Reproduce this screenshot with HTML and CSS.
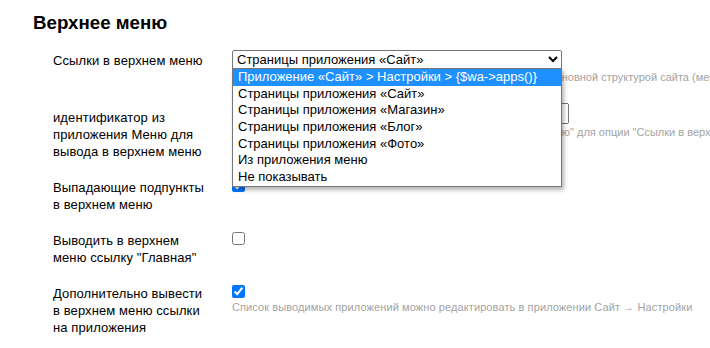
FILE: index.html
```html
<!DOCTYPE html>
<html lang="ru">
<head>
    <meta charset="UTF-8">
    <title>Верхнее меню</title>
    <link rel="stylesheet" href="styles.css">
</head>
<body>
    <div class="page">
        <h1 class="title">Верхнее меню</h1>
        <div class="fields">
            <div class="field">
                <div class="name name-top">Ссылки в верхнем меню</div>
                <div class="value">
                    <div class="dropdown">
                        <select class="menu-select">
                            <option>Страницы приложения «Сайт»</option>
                        </select>
                        <ul class="options">
                            <li class="selected">Приложение «Сайт» &gt; Настройки &gt; {$wa-&gt;apps()}</li>
                            <li>Страницы приложения «Сайт»</li>
                            <li>Страницы приложения «Магазин»</li>
                            <li>Страницы приложения «Блог»</li>
                            <li>Страницы приложения «Фото»</li>
                            <li>Из приложения меню</li>
                            <li>Не показывать</li>
                        </ul>
                    </div>
                    <p class="hint">Укажите откуда идут ссылки верхнего меню: в соответствии с основной структурой сайта (меню)</p>
                </div>
            </div>
            <div class="field">
                <div class="name name-low">идентификатор из приложения Меню для вывода в верхнем меню</div>
                <div class="value">
                    <input type="text" class="text-input">
                    <p class="hint">Укажите код меню, если выбрано значение "Из приложения меню" для опции "Ссылки в верхнем меню"</p>
                </div>
            </div>
            <div class="field">
                <div class="name">Выпадающие подпункты в верхнем меню</div>
                <div class="value">
                    <input type="checkbox" checked>
                </div>
            </div>
            <div class="field">
                <div class="name">Выводить в верхнем меню ссылку "Главная"</div>
                <div class="value">
                    <input type="checkbox">
                </div>
            </div>
            <div class="field">
                <div class="name">Дополнительно вывести в верхнем меню ссылки на приложения</div>
                <div class="value">
                    <input type="checkbox" checked>
                    <p class="hint hint-wide">Список выводимых приложений можно редактировать в приложении Сайт → Настройки</p>
                </div>
            </div>
        </div>
    </div>
</body>
</html>
```

FILE: styles.css
```css
body {
    margin: 0;
    font-family: 'Liberation Sans', Arial, sans-serif;
    font-size: 13px;
    color: #000;
    background: #fff;
    overflow: hidden;
}

.page {
    padding: 12px 0 0 33px;
}

.title {
    margin: 0;
    font-size: 18.7px;
    line-height: 22px;
    font-weight: bold;
}

.fields {
    display: flex;
    flex-direction: column;
    gap: 19px;
    margin-top: 16px;
    padding-left: 20px;
}

.field {
    display: grid;
    grid-template-columns: 153px 1fr;
    column-gap: 26px;
    align-items: start;
}

.name {
    line-height: 17px;
    letter-spacing: 0.1px;
}

.name-top {
    padding-top: 2px;
}

.name-low {
    padding-top: 6px;
}

.value {
    display: flex;
    flex-direction: column;
    align-items: flex-start;
    min-width: 0;
}

.value input[type="checkbox"] {
    width: 13px;
    height: 13px;
    margin: 0;
}

.hint {
    margin: 1px 0 0;
    font-size: 11px;
    line-height: 14px;
    color: #a3a3a3;
    white-space: nowrap;
}

.hint-wide {
    letter-spacing: 0.1px;
}

.value input[type="checkbox"] + .hint {
    margin-top: 2px;
}

.dropdown {
    position: relative;
    z-index: 2;
}

.menu-select {
    box-sizing: border-box;
    width: 330px;
    height: 19px;
    margin: 0;
    padding-top: 0;
    padding-bottom: 0;
    font-family: inherit;
    font-size: 13px;
    color: #000;
}

.options {
    position: absolute;
    top: 18px;
    left: 0;
    width: 330px;
    box-sizing: border-box;
    margin: 0;
    padding: 0;
    list-style: none;
    background: #fff;
    border: 1px solid #767676;
    box-shadow: 2px 3px 4px rgba(0, 0, 0, 0.3);
}

.options li {
    height: 16.7px;
    line-height: 16.7px;
    padding-left: 5px;
    white-space: nowrap;
}

.options .selected {
    background: #1e90ff;
    color: #fff;
}

.text-input {
    box-sizing: border-box;
    width: 337px;
    height: 21px;
    margin: 0;
    font-family: inherit;
    font-size: 13px;
}
```
